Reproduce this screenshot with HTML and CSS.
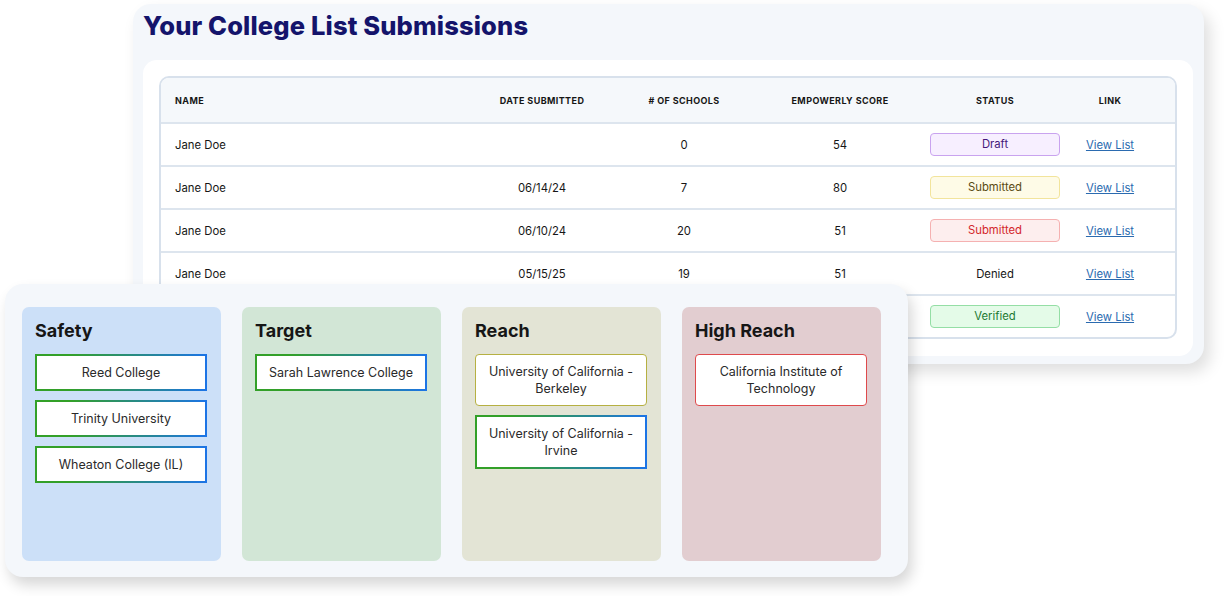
FILE: index.html
```html
<!DOCTYPE html>
<html lang="en">

<head>
    <meta charset="UTF-8">
    <meta name="viewport" content="width=device-width, initial-scale=1.0">
    <title>College List Submissions</title>

    <link rel="stylesheet" href="styles.css">
</head>

<body>
    <div class="desk">
        <section class="submissions">
            <h1>Your College List Submissions</h1>
            <div class="sheet">
                <div class="table">
                    <div class="row head">
                        <div class="cell name">Name</div>
                        <div class="cell">Date Submitted</div>
                        <div class="cell"># of Schools</div>
                        <div class="cell">Empowerly Score</div>
                        <div class="cell">Status</div>
                        <div class="cell">Link</div>
                    </div>
                    <div class="row">
                        <div class="cell name">Jane Doe</div>
                        <div class="cell"></div>
                        <div class="cell">0</div>
                        <div class="cell">54</div>
                        <div class="cell"><span class="badge draft">Draft</span></div>
                        <div class="cell"><a href="#">View List</a></div>
                    </div>
                    <div class="row">
                        <div class="cell name">Jane Doe</div>
                        <div class="cell">06/14/24</div>
                        <div class="cell">7</div>
                        <div class="cell">80</div>
                        <div class="cell"><span class="badge pending">Submitted</span></div>
                        <div class="cell"><a href="#">View List</a></div>
                    </div>
                    <div class="row">
                        <div class="cell name">Jane Doe</div>
                        <div class="cell">06/10/24</div>
                        <div class="cell">20</div>
                        <div class="cell">51</div>
                        <div class="cell"><span class="badge late">Submitted</span></div>
                        <div class="cell"><a href="#">View List</a></div>
                    </div>
                    <div class="row">
                        <div class="cell name">Jane Doe</div>
                        <div class="cell">05/15/25</div>
                        <div class="cell">19</div>
                        <div class="cell">51</div>
                        <div class="cell">Denied</div>
                        <div class="cell"><a href="#">View List</a></div>
                    </div>
                    <div class="row">
                        <div class="cell name">Jane Doe</div>
                        <div class="cell"></div>
                        <div class="cell"></div>
                        <div class="cell"></div>
                        <div class="cell"><span class="badge verified">Verified</span></div>
                        <div class="cell"><a href="#">View List</a></div>
                    </div>
                </div>
            </div>
        </section>

        <section class="board">
            <div class="bucket safety">
                <h2>Safety</h2>
                <div class="school">Reed College</div>
                <div class="school">Trinity University</div>
                <div class="school">Wheaton College (IL)</div>
            </div>
            <div class="bucket target">
                <h2>Target</h2>
                <div class="school">Sarah Lawrence College</div>
            </div>
            <div class="bucket reach">
                <h2>Reach</h2>
                <div class="school olive">University of California - Berkeley</div>
                <div class="school">University of California - Irvine</div>
            </div>
            <div class="bucket high">
                <h2>High Reach</h2>
                <div class="school red">California Institute of Technology</div>
            </div>
        </section>
    </div>
</body>

</html>
```

FILE: styles.css
```css
* {
    box-sizing: border-box;
}

body {
    margin: 0;
    background-color: #fff;
    font-family: Inter, "Noto Sans", sans-serif;
    color: #161616;
}

.desk {
    position: relative;
    width: 1224px;
    height: 596px;
}

/* back window: the submissions table */
.submissions {
    position: absolute;
    left: 133px;
    top: 4px;
    width: 1071px;
    height: 360px;
    padding: 6px 11px 0 10px;
    background-color: #f4f7fb;
    border-radius: 18px;
    box-shadow: 6px 8px 16px rgba(0, 0, 0, 0.13);
}

h1 {
    margin: 0;
    font-size: 25.5px;
    line-height: 32px;
    font-weight: 800;
    letter-spacing: 0.15px;
    color: #14146b;
}

.sheet {
    margin-top: 18px;
    padding: 16px 16px 17px;
    background-color: #fff;
    border-radius: 14px;
}

.table {
    border: 2px solid #d8e1ec;
    border-radius: 10px;
    overflow: hidden;
}

.row {
    display: grid;
    grid-template-columns: 309px 144px 140px 172px 138px 92px;
    height: 43px;
    align-items: center;
    font-size: 11.3px;
    border-top: 2px solid #dde5ee;
}

.row.head {
    height: 44px;
    border-top: none;
    background-color: #f5f8fb;
    font-size: 9px;
    font-weight: 700;
    text-transform: uppercase;
    letter-spacing: 0.4px;
}

.cell {
    text-align: center;
}

.cell.name {
    text-align: left;
    padding-left: 14px;
}

.badge {
    display: inline-block;
    width: 130px;
    height: 23px;
    line-height: 21px;
    border: 1px solid;
    border-radius: 4px;
}

.draft {
    background-color: #f7efff;
    border-color: #c9a3ef;
    color: #45197a;
}

.pending {
    background-color: #fefbe7;
    border-color: #f2e49c;
    color: #5a4a12;
}

.late {
    background-color: #fdeeee;
    border-color: #f5b1b1;
    color: #d3262b;
}

.verified {
    background-color: #e4fbe8;
    border-color: #94dea5;
    color: #1e7a34;
}

a {
    color: #2b6bb0;
}

/* front window: list buckets */
.board {
    position: absolute;
    left: 5px;
    top: 284px;
    width: 903px;
    height: 293px;
    padding: 23px 0 16px 17px;
    display: flex;
    gap: 21px;
    background-color: #f4f7fb;
    border-radius: 18px;
    box-shadow: 4px 8px 14px rgba(0, 0, 0, 0.16);
}

.bucket {
    width: 199px;
    padding: 13px 14px 0 13px;
    border-radius: 7px;
}

.safety {
    background-color: #cce0f8;
}

.target {
    background-color: #d2e6d6;
}

.reach {
    background-color: #e3e4d5;
}

.high {
    background-color: #e2cdd0;
}

h2 {
    margin: 0 0 12px;
    font-size: 18px;
    line-height: 22px;
    font-weight: 700;
}

.school {
    margin-bottom: 9px;
    padding: 8px 5px;
    background-color: #fff;
    border: 2px solid;
    border-image: linear-gradient(to right, #33a028 20%, #1c74e6) 1;
    font-size: 12.5px;
    line-height: 17px;
    text-align: center;
    color: #2a2a2a;
}

.school.olive {
    border-image: none;
    border: 1.5px solid #b6b042;
    border-radius: 4px;
}

.school.red {
    border-image: none;
    border: 1.5px solid #de4a4c;
    border-radius: 4px;
}
```
